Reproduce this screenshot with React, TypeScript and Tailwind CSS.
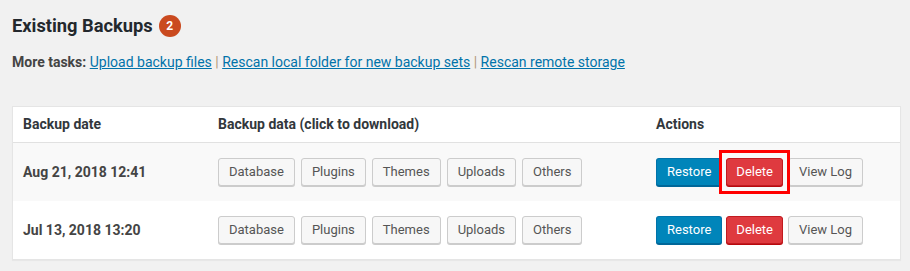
import React from 'react';

type Backup = { date: string; flagged?: boolean };

const backups: Backup[] = [
  { date: 'Aug 21, 2018 12:41', flagged: true },
  { date: 'Jul 13, 2018 13:20' },
];

const entities = ['Database', 'Plugins', 'Themes', 'Uploads', 'Others'];

function GreyButton({ children }: { children: React.ReactNode }) {
  return (
    <button className="h-[28px] px-[10px] rounded-[3px] border border-[#cccccc] bg-[#f7f7f7] text-[13px] leading-[26px] text-[#555555] shadow-[0_1px_0_#cccccc]">
      {children}
    </button>
  );
}

function BackupRow({ backup, striped }: { backup: Backup; striped: boolean }) {
  return (
    <div
      className={`grid grid-cols-[195px_438px_1fr] items-center h-[58px] ${
        striped ? 'bg-[#f9f9f9]' : 'bg-white'
      }`}
    >
      <div className="px-[10px] text-[14px] font-bold text-[#444444]">{backup.date}</div>
      <div className="flex gap-[6px] px-[10px]">
        {entities.map((e) => (
          <GreyButton key={e}>{e}</GreyButton>
        ))}
      </div>
      <div className="flex items-center px-[10px]">
        <button className="h-[28px] px-[10px] rounded-[3px] border border-[#0073aa] border-b-[#006799] bg-[#0085ba] text-[13px] leading-[26px] text-white shadow-[0_1px_0_#006799]">
          Restore
        </button>
        <div className="relative ml-[4px]">
          <button className="h-[28px] px-[9px] rounded-[3px] border border-[#c21b20] bg-[#df3a3f] text-[13px] leading-[26px] text-white shadow-[0_1px_0_#b8080d]">
            Delete
          </button>
          {backup.flagged && (
            <div className="absolute -left-[7px] -right-[7px] -top-[8px] -bottom-[8px] border-[3px] border-[#ff0000]" />
          )}
        </div>
        <div className="ml-[5px]">
          <GreyButton>View Log</GreyButton>
        </div>
      </div>
    </div>
  );
}

export default function App() {
  return (
    <div className="min-h-screen bg-[#f1f1f1] pl-[12px] pr-[9px] pt-[14px] font-['Roboto',sans-serif] text-[#23282d]">
      <h2 className="flex items-center gap-[6px] text-[18.3px] font-bold leading-[24px]">
        Existing Backups
        <span className="flex h-[22px] w-[22px] items-center justify-center rounded-full bg-[#ca4a1f] text-[12px] font-bold text-white">
          2
        </span>
      </h2>

      <p className="mt-[14px] text-[14px] leading-[20px] text-[#444444]">
        <strong className="text-[#444444]">More tasks:</strong>{' '}
        <a className="text-[#0073aa] underline">Upload backup files</a>
        <span className="text-[#b39a7a]"> | </span>
        <a className="text-[#0073aa] underline">Rescan local folder for new backup sets</a>
        <span className="text-[#b39a7a]"> | </span>
        <a className="text-[#0073aa] underline">Rescan remote storage</a>
      </p>

      <div className="mt-[34px] border border-[#e5e5e5] bg-white shadow-[0_1px_1px_rgba(0,0,0,0.04)]">
        <div className="grid grid-cols-[195px_438px_1fr] items-center h-[36px] border-b border-[#e1e1e1] text-[14px] font-bold text-[#32373c]">
          <div className="px-[10px]">Backup date</div>
          <div className="px-[10px]">Backup data (click to download)</div>
          <div className="px-[10px]">Actions</div>
        </div>
        {backups.map((b, i) => (
          <BackupRow key={b.date} backup={b} striped={i % 2 === 0} />
        ))}
      </div>
    </div>
  );
}
